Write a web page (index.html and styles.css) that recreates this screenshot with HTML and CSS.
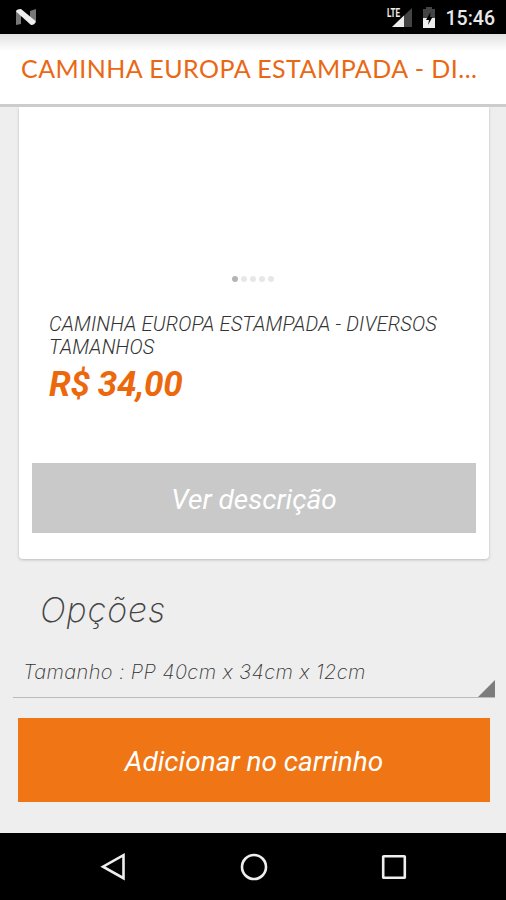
FILE: index.html
```html
<!DOCTYPE html>
<html lang="pt-BR">
<head>
<meta charset="utf-8">
<title>Caminha Europa Estampada</title>
<link rel="stylesheet" href="styles.css">
</head>
<body>
<div class="screen">
  <header class="status">
    <svg class="n-icon" width="22" height="18" viewBox="0 0 22 18"><path fill="#777" d="M1 3L6 6V16L1 17ZM15 3L21 1V15L15 12Z"/><path fill="#eee" d="M1 3.5Q1 1 6 1L20.500 13Q20.500 17 16 17Z"/></svg>
    <div class="status-right">
      <svg class="signal" width="26" height="22" viewBox="0 0 26 22"><path fill="#444" d="M25 2V21H5Z"/><path fill="#eee" d="M17 9.6V21H5Z"/><path fill="#000" d="M0 0H14V12H0Z"/><text class="lte" x="0" y="10.500" textLength="13" lengthAdjust="spacingAndGlyphs">LTE</text></svg>
      <svg class="battery" width="14" height="21" viewBox="0 0 14 21"><path fill="#444" d="M4 0H10V2H13V11H1V2H4Z"/><path fill="#eee" d="M1 11H13V21H1Z"/><path fill="#000" d="M8.500 5L4 13H7L6 18L10.500 10H8Z"/></svg>
      <span class="clock">15:46</span>
    </div>
  </header>
  <div class="titlebar"><h1>CAMINHA EUROPA ESTAMPADA - DI...</h1></div>
  <main>
    <section class="card">
      <div class="dots"><i class="on"></i><i></i><i></i><i></i><i></i></div>
      <h2>CAMINHA EUROPA ESTAMPADA - DIVERSOS<br>TAMANHOS</h2>
      <p class="price">R$ 34,00</p>
      <button class="describe"><span>Ver descrição</span></button>
    </section>
    <h3><span>Opções</span></h3>
    <div class="select"><span>Tamanho : PP 40cm x 34cm x 12cm</span><svg width="17" height="17" viewBox="0 0 17 17"><path fill="#7c7c7c" d="M17 0V17H0Z"/></svg></div>
    <button class="add"><span>Adicionar no carrinho</span></button>
  </main>
  <nav>
    <svg width="28" height="28" viewBox="0 0 28 28"><path d="M23.5 2.2V25.2L3 13.7Z"/></svg>
    <svg width="28" height="28" viewBox="0 0 28 28"><circle cx="14" cy="14" r="12"/></svg>
    <svg width="28" height="28" viewBox="0 0 28 28"><rect x="3.2" y="3.2" width="21.6" height="21.6" rx=".6"/></svg>
  </nav>
</div>
</body>
</html>
```
FILE: styles.css
```css
* { box-sizing: border-box; }
body { margin: 0; }
h1, h2, h3, p { margin: 0; font-weight: 400; white-space: nowrap; }
button { border: 0; padding: 4px 0 0; display: block; color: #fff; font: italic 400 28px/32px Roboto, sans-serif; }
.screen { width: 506px; height: 900px; display: flex; flex-direction: column; background: #eee; overflow: hidden; font-family: Roboto, sans-serif; }
.status { height: 34px; flex: none; background: #000; display: flex; justify-content: space-between; padding: 0 11px 0 15px; }
.n-icon { margin-top: 8px; }
.status-right { display: flex; }
.signal { margin-top: 6px; }
.lte { font: 700 12px Roboto, sans-serif; fill: #eee; }
.battery { margin: 7px 0 0 9px; }
.clock { margin: 7px 0 0 10px; font-size: 19.5px; line-height: 24px; font-weight: 500; color: #e8e8e8; }
.titlebar { height: 73px; flex: none; padding: 18px 0 0 21px; background: linear-gradient(#e2e2e2, #fff 17px); border-bottom: 3px solid #ccc; }
h1 { font: 400 25px/32px Lato, sans-serif; letter-spacing: .47px; color: #ea6814; }
main { height: 726px; flex: none; }
.card { width: 470px; height: 452px; margin-left: 19px; padding: 169px 13px 0; background: #fff; border-radius: 0 0 4px 4px; box-shadow: 0 1px 3px #bbb; clip-path: inset(0 -4px -5px -4px); }
.dots { display: flex; gap: 3px; padding-left: 200px; }
.dots i { width: 6px; height: 6px; border-radius: 50%; background: #e7e7e7; }
.dots .on { background: #b5b5b5; }
h2 { margin: 31px 0 0 17px; font: italic 300 20px/23px Roboto, sans-serif; letter-spacing: .16px; color: #333; }
.price { margin: 5px 0 0 17px; font: italic 700 35px/42px Roboto, sans-serif; letter-spacing: -.35px; color: #ec680c; }
.describe { width: 444px; height: 70px; margin-top: 57px; background: #c9c9c9; }
h3 { margin: 30px 0 0 40px; font: italic 200 34px/42px Inter, sans-serif; letter-spacing: .95px; color: #444; }
.select { width: 482px; height: 38px; margin: 29px 0 0 13px; padding-left: 10px; border-bottom: 1px solid #bbb; display: flex; justify-content: space-between; align-items: flex-end; font: italic 200 20px/24px Inter, sans-serif; letter-spacing: .38px; color: #333; }
.select span { align-self: flex-start; white-space: nowrap; }
.add { width: 472px; height: 84px; margin: 20px 0 0 18px; padding-top: 3px; background: #f07514; }
nav { flex: 1; background: #000; display: flex; padding: 20px 98px 0 100px; justify-content: space-between; }
nav svg { fill: none; stroke: #eee; stroke-width: 2.6; }
```
